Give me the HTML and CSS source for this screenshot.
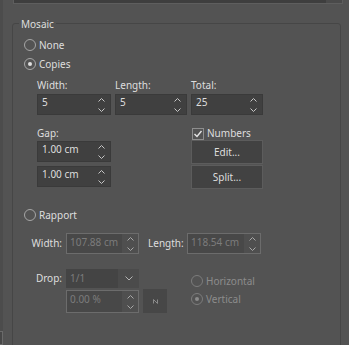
FILE: index.html
```html
<!DOCTYPE html>
<html>
<head>
    <meta charset="UTF-8">
    <title>Mosaic</title>
    <link rel="stylesheet" href="styles.css">
</head>
<body>
<div class="page">
    <div class="edge"><div class="edgeBox"></div></div>
    <div class="main">
        <div class="topCombo"><div class="topField"></div><div class="topButton"></div></div>

        <fieldset class="group">
            <legend>Mosaic</legend>

            <div class="radio first"><span class="dot"></span>None</div>
            <div class="radio on"><span class="dot"></span>Copies</div>

            <div class="copies">
                <div class="field">
                    <div class="cap">Width:</div>
                    <div class="spin"><span class="val">5</span><span class="arrows"><svg width="7" height="14" viewBox="0 0 7 14"><path d="M0.5 3.5 L3.5 0.5 L6.5 3.5 M0.5 10.5 L3.5 13.5 L6.5 10.5" fill="none" stroke="#c6c6c6" stroke-width="1"/></svg></span></div>
                </div>
                <div class="field">
                    <div class="cap">Length:</div>
                    <div class="spin"><span class="val">5</span><span class="arrows"><svg width="7" height="14" viewBox="0 0 7 14"><path d="M0.5 3.5 L3.5 0.5 L6.5 3.5 M0.5 10.5 L3.5 13.5 L6.5 10.5" fill="none" stroke="#c6c6c6" stroke-width="1"/></svg></span></div>
                </div>
                <div class="field">
                    <div class="cap">Total:</div>
                    <div class="spin"><span class="val">25</span><span class="arrows"><svg width="7" height="14" viewBox="0 0 7 14"><path d="M0.5 3.5 L3.5 0.5 L6.5 3.5 M0.5 10.5 L3.5 13.5 L6.5 10.5" fill="none" stroke="#c6c6c6" stroke-width="1"/></svg></span></div>
                </div>
            </div>

            <div class="gapRow">
                <div class="gapCol">
                    <div class="cap gapCap">Gap:</div>
                    <div class="spin"><span class="val">1.00 cm</span><span class="arrows"><svg width="7" height="14" viewBox="0 0 7 14"><path d="M0.5 3.5 L3.5 0.5 L6.5 3.5 M0.5 10.5 L3.5 13.5 L6.5 10.5" fill="none" stroke="#c6c6c6" stroke-width="1"/></svg></span></div>
                    <div class="spin"><span class="val">1.00 cm</span><span class="arrows"><svg width="7" height="14" viewBox="0 0 7 14"><path d="M0.5 3.5 L3.5 0.5 L6.5 3.5 M0.5 10.5 L3.5 13.5 L6.5 10.5" fill="none" stroke="#c6c6c6" stroke-width="1"/></svg></span></div>
                </div>
                <div class="numCol">
                    <div class="check"><span class="box"><svg width="10" height="10" viewBox="0 0 10 10"><path d="M1.5 5 L4 7.5 L8.5 2" fill="none" stroke="#e6e6e6" stroke-width="1.4"/></svg></span>Numbers</div>
                    <div class="btn">Edit...</div>
                    <div class="btn">Split...</div>
                </div>
            </div>

            <div class="radio rapport"><span class="dot"></span>Rapport</div>

            <div class="rapRow">
                <div class="lab">Width:</div>
                <div class="spin off"><span class="val">107.88 cm</span><span class="arrows"><svg width="7" height="14" viewBox="0 0 7 14"><path d="M0.5 3.5 L3.5 0.5 L6.5 3.5 M0.5 10.5 L3.5 13.5 L6.5 10.5" fill="none" stroke="#a8a8a8" stroke-width="1"/></svg></span></div>
                <div class="lab lenLab">Length:</div>
                <div class="spin off wide"><span class="val">118.54 cm</span><span class="arrows"><svg width="7" height="14" viewBox="0 0 7 14"><path d="M0.5 3.5 L3.5 0.5 L6.5 3.5 M0.5 10.5 L3.5 13.5 L6.5 10.5" fill="none" stroke="#a8a8a8" stroke-width="1"/></svg></span></div>
            </div>

            <div class="dropRow">
                <div class="dropGrid">
                    <div class="lab">Drop:</div>
                    <div class="combo"><span class="val">1/1</span><span class="comboBtn"><svg width="8" height="5" viewBox="0 0 8 5"><path d="M0.5 0.5 L4 4 L7.5 0.5" fill="none" stroke="#b4b4b4" stroke-width="1"/></svg></span></div>
                    <div></div>
                    <div></div>
                    <div class="spin off tall"><span class="val">0.00 %</span><span class="arrows"><svg width="7" height="14" viewBox="0 0 7 14"><path d="M0.5 3.5 L3.5 0.5 L6.5 3.5 M0.5 10.5 L3.5 13.5 L6.5 10.5" fill="none" stroke="#a8a8a8" stroke-width="1"/></svg></span></div>
                    <div class="mini"><svg width="5" height="5" viewBox="0 0 5 5"><path d="M0.5 0.5 L0.5 4.5 M0.5 0.5 L4.5 4.5 M4.5 0.5 L4.5 4.5" fill="none" stroke="#8a8a8a" stroke-width="1"/></svg></div>
                </div>
                <div class="dirCol">
                    <div class="radio off"><span class="dot"></span>Horizontal</div>
                    <div class="radio off on"><span class="dot"></span>Vertical</div>
                </div>
            </div>
        </fieldset>
    </div>
</div>
</body>
</html>
```
FILE: styles.css
```css
body {
    margin: 0;
    background: #535353;
    font-family: "Noto Sans", "Open Sans", sans-serif;
    font-size: 10px;
    color: #dedede;
}
.page {
    display: flex;
    height: 345px;
    overflow: hidden;
}
.edge {
    width: 3px;
    margin-right: 9px;
    background: #4c4c4c;
    display: flex;
    flex-direction: column;
}
.edgeBox {
    margin-top: auto;
    height: 12px;
    border: 1px solid #6a6a6a;
    border-left: 0;
    background: #474747;
}
.main {
    width: 331px;
}
.topCombo {
    height: 3px;
    display: flex;
    margin-left: 1px;
    border: 1px solid #5e5e5e;
    border-top: 0;
}
.topField {
    flex: 1;
    background: #3e3e3e;
}
.topButton {
    width: 16px;
    background: #4a4a4a;
}

.group {
    margin: 11px 0 0 0;
    padding: 0 0 40px 0;
    width: 327px;
    border: 1px solid #464646;
    border-radius: 3px;
    min-width: 0;
}
.group legend {
    margin-left: 6px;
    padding: 2px 2px 0;
    line-height: 14px;
}

.radio {
    display: flex;
    align-items: center;
    height: 19px;
    padding-left: 11px;
}
.radio.first {
    margin-top: 4px;
}
.dot {
    width: 10px;
    height: 10px;
    border: 1px solid #a6a6a6;
    border-radius: 50%;
    margin-right: 3px;
    display: flex;
    align-items: center;
    justify-content: center;
}
.radio.on .dot::after {
    content: "";
    width: 4px;
    height: 4px;
    border-radius: 50%;
    background: #e0e0e0;
}
.radio.off {
    color: #8c8c8c;
    padding-left: 0;
    height: 18px;
}
.radio.off .dot {
    border-color: #7c7c7c;
}
.radio.off.on .dot::after {
    background: #8c8c8c;
}

.copies {
    display: grid;
    grid-template-columns: 74px 72px 72px;
    column-gap: 4px;
    margin-top: 4px;
    padding-left: 24px;
}
.cap {
    line-height: 17px;
}
.spin {
    display: flex;
    height: 19px;
    border: 1px solid #3a3a3a;
    background: #404040;
}
.spin .val {
    flex: 1;
    padding-left: 4px;
    line-height: 14px;
}
.arrows {
    width: 18px;
    display: flex;
    align-items: center;
    justify-content: center;
}

.gapRow {
    display: flex;
    margin-top: 10px;
    padding-left: 24px;
}
.gapCol {
    width: 74px;
    display: flex;
    flex-direction: column;
    gap: 4px;
}
.gapCol .gapCap {
    line-height: 16px;
    margin-bottom: -4px;
}
.numCol {
    width: 72px;
    margin-left: 80px;
    display: flex;
    flex-direction: column;
    gap: 1px;
}
.check {
    display: flex;
    align-items: center;
    height: 13px;
    padding-top: 2px;
    margin-bottom: -1px;
    line-height: 13px;
    padding-left: 1px;
}
.check .box {
    width: 10px;
    height: 10px;
    border: 1px solid #8e8e8e;
    margin-right: 3px;
    display: flex;
}
.btn {
    height: 22px;
    line-height: 22px;
    text-align: center;
    background: #424242;
    border: 1px solid #5c5c5c;
}

.radio.rapport {
    margin-top: 16px;
}

.rapRow {
    display: flex;
    margin-top: 9px;
}
.lab {
    width: 49px;
    text-align: right;
    line-height: 21px;
}
.rapRow .spin, .dropGrid .spin {
    margin-left: 4px;
}
.spin.off {
    width: 71px;
    border-color: #6c6c6c;
    background: #484848;
    color: #7c7c7c;
}
.spin.off .val {
    padding-top: 1px;
    padding-left: 3px;
}
.spin.off .arrows {
    width: 16px;
    background: #4f4f4f;
}
.spin.wide {
    width: 72px;
    margin-left: 3px;
}
.lenLab {
    width: 36px;
    margin-left: 9px;
    text-align: left;
}

.dropRow {
    display: flex;
    margin-top: 15px;
}
.dropGrid {
    display: grid;
    grid-template-columns: 49px 77px 28px;
    row-gap: 2px;
    align-items: start;
}
.dropGrid .lab {
    line-height: 19px;
}
.combo {
    margin-left: 4px;
    height: 19px;
    display: flex;
    background: #444444;
    color: #7c7c7c;
    width: 73px;
}
.combo .val {
    flex: 1;
    padding-left: 4px;
    line-height: 19px;
}
.comboBtn {
    width: 21px;
    background: #4b4b4b;
    display: flex;
    align-items: center;
    justify-content: center;
}
.spin.tall {
    height: 21px;
}
.mini {
    margin-left: 4px;
    width: 24px;
    height: 24px;
    margin-top: -1px;
    background: #474747;
    display: flex;
    align-items: center;
    justify-content: center;
}
.dirCol {
    margin-left: 24px;
    margin-top: 3px;
}
```
